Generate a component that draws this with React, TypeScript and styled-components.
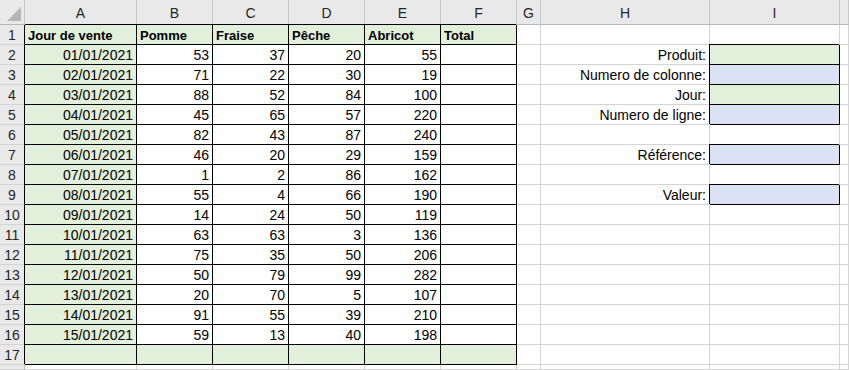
import React from 'react';
import styled, { createGlobalStyle } from 'styled-components';

const GlobalStyle = createGlobalStyle`
  html, body {
    margin: 0;
    padding: 0;
    background: #ffffff;
    overflow: hidden;
  }
`;

const GREEN = '#e2efda';
const BLUE = '#d9e1f2';

const Sheet = styled.div`
  display: grid;
  grid-template-columns: 25px 112px repeat(5, 76px) 24px 169px 130px 1fr;
  grid-template-rows: 25px repeat(17, 20px) 1fr;
  width: 849px;
  height: 370px;
  font-family: "Liberation Sans", Arial, sans-serif;
  font-size: 14px;
  color: #000;
  background: #fff;
`;

const Corner = styled.div`
  position: relative;
  background: #e9e9e9;
  border-right: 1px solid #c8c8c8;
  border-bottom: 1px solid #b8b8b8;

  &::after {
    content: '';
    position: absolute;
    right: 3px;
    bottom: 3px;
    width: 0;
    height: 0;
    border-left: 14px solid transparent;
    border-bottom: 14px solid #b6b6b6;
  }
`;

const ColHead = styled.div`
  background: #e9e9e9;
  border-right: 1px solid #c8c8c8;
  border-bottom: 1px solid #b8b8b8;
  display: flex;
  align-items: center;
  justify-content: center;
  padding-top: 2px;
  font-size: 14px;
  color: #262626;
`;

const RowHead = styled.div`
  background: #e9e9e9;
  border-right: 1px solid #b8b8b8;
  border-bottom: 1px solid #d4d4d4;
  display: flex;
  align-items: flex-end;
  justify-content: center;
  padding-bottom: 1px;
  font-size: 14px;
  color: #262626;
`;

type Align = 'left' | 'right' | 'center';

const Cell = styled.div<{ $fill?: string; $bold?: boolean; $align?: Align; $boxed?: boolean }>`
  background: ${(p) => p.$fill || '#fff'};
  border-right: 1px solid ${(p) => (p.$boxed ? '#000' : '#d4d4d4')};
  border-bottom: 1px solid ${(p) => (p.$boxed ? '#000' : '#d4d4d4')};
  box-shadow: ${(p) => (p.$boxed ? '-1px -1px 0 0 #000' : 'none')};
  display: flex;
  align-items: flex-end;
  justify-content: ${(p) => (p.$align === 'right' ? 'flex-end' : p.$align === 'center' ? 'center' : 'flex-start')};
  padding: 0 3px 1px 3px;
  font-weight: ${(p) => (p.$bold ? 700 : 400)};
  font-size: ${(p) => (p.$bold ? '13px' : '14px')};
  white-space: nowrap;
  overflow: visible;
  min-width: 0;
`;

const columns = ['A', 'B', 'C', 'D', 'E', 'F', 'G', 'H', 'I', ''];

const sales: [string, number, number, number, number][] = [
  ['01/01/2021', 53, 37, 20, 55],
  ['02/01/2021', 71, 22, 30, 19],
  ['03/01/2021', 88, 52, 84, 100],
  ['04/01/2021', 45, 65, 57, 220],
  ['05/01/2021', 82, 43, 87, 240],
  ['06/01/2021', 46, 20, 29, 159],
  ['07/01/2021', 1, 2, 86, 162],
  ['08/01/2021', 55, 4, 66, 190],
  ['09/01/2021', 14, 24, 50, 119],
  ['10/01/2021', 63, 63, 3, 136],
  ['11/01/2021', 75, 35, 50, 206],
  ['12/01/2021', 50, 79, 99, 282],
  ['13/01/2021', 20, 70, 5, 107],
  ['14/01/2021', 91, 55, 39, 210],
  ['15/01/2021', 59, 13, 40, 198],
];

const headers = ['Jour de vente', 'Pomme', 'Fraise', 'Pêche', 'Abricot', 'Total'];

// lookup panel on the right: row number -> label + fill
const lookup: Record<number, { label: string; fill: string }> = {
  2: { label: 'Produit:', fill: GREEN },
  3: { label: 'Numero de colonne:', fill: BLUE },
  4: { label: 'Jour:', fill: GREEN },
  5: { label: 'Numero de ligne:', fill: BLUE },
  7: { label: 'Référence:', fill: BLUE },
  9: { label: 'Valeur:', fill: BLUE },
};

const renderRow = (r: number) => {
  const cells: React.ReactNode[] = [<RowHead key="h">{r}</RowHead>];

  // table A..F
  for (let c = 0; c < 6; c++) {
    let text: React.ReactNode = '';
    let fill: string | undefined;
    let bold = false;
    let align: Align = 'right';
    if (r === 1) {
      text = headers[c];
      fill = GREEN;
      bold = true;
      align = 'left';
    } else if (r === 17) {
      fill = GREEN;
    } else {
      const row = sales[r - 2];
      if (c === 0) fill = GREEN;
      if (c < 5) text = row[c];
    }
    cells.push(
      <Cell key={c} $fill={fill} $bold={bold} $align={align} $boxed>
        {text}
      </Cell>
    );
  }

  // G
  cells.push(<Cell key="g" />);

  // H + I
  const item = lookup[r];
  cells.push(
    <Cell key="hh" $align="right">
      {item ? item.label : ''}
    </Cell>
  );
  cells.push(<Cell key="i" $fill={item?.fill} $boxed={!!item} />);

  // J
  cells.push(<Cell key="j" />);
  return cells;
};

const App = () => {
  const rows = Array.from({ length: 17 }, (_, i) => i + 1);
  return (
    <>
      <GlobalStyle />
      <Sheet>
        <Corner />
        {columns.map((c, i) => (
          <ColHead key={i}>{c}</ColHead>
        ))}
        {rows.map((r) => renderRow(r))}
        <RowHead />
        {columns.map((_, i) => (
          <Cell key={'last' + i} />
        ))}
      </Sheet>
    </>
  );
};

export default App;
